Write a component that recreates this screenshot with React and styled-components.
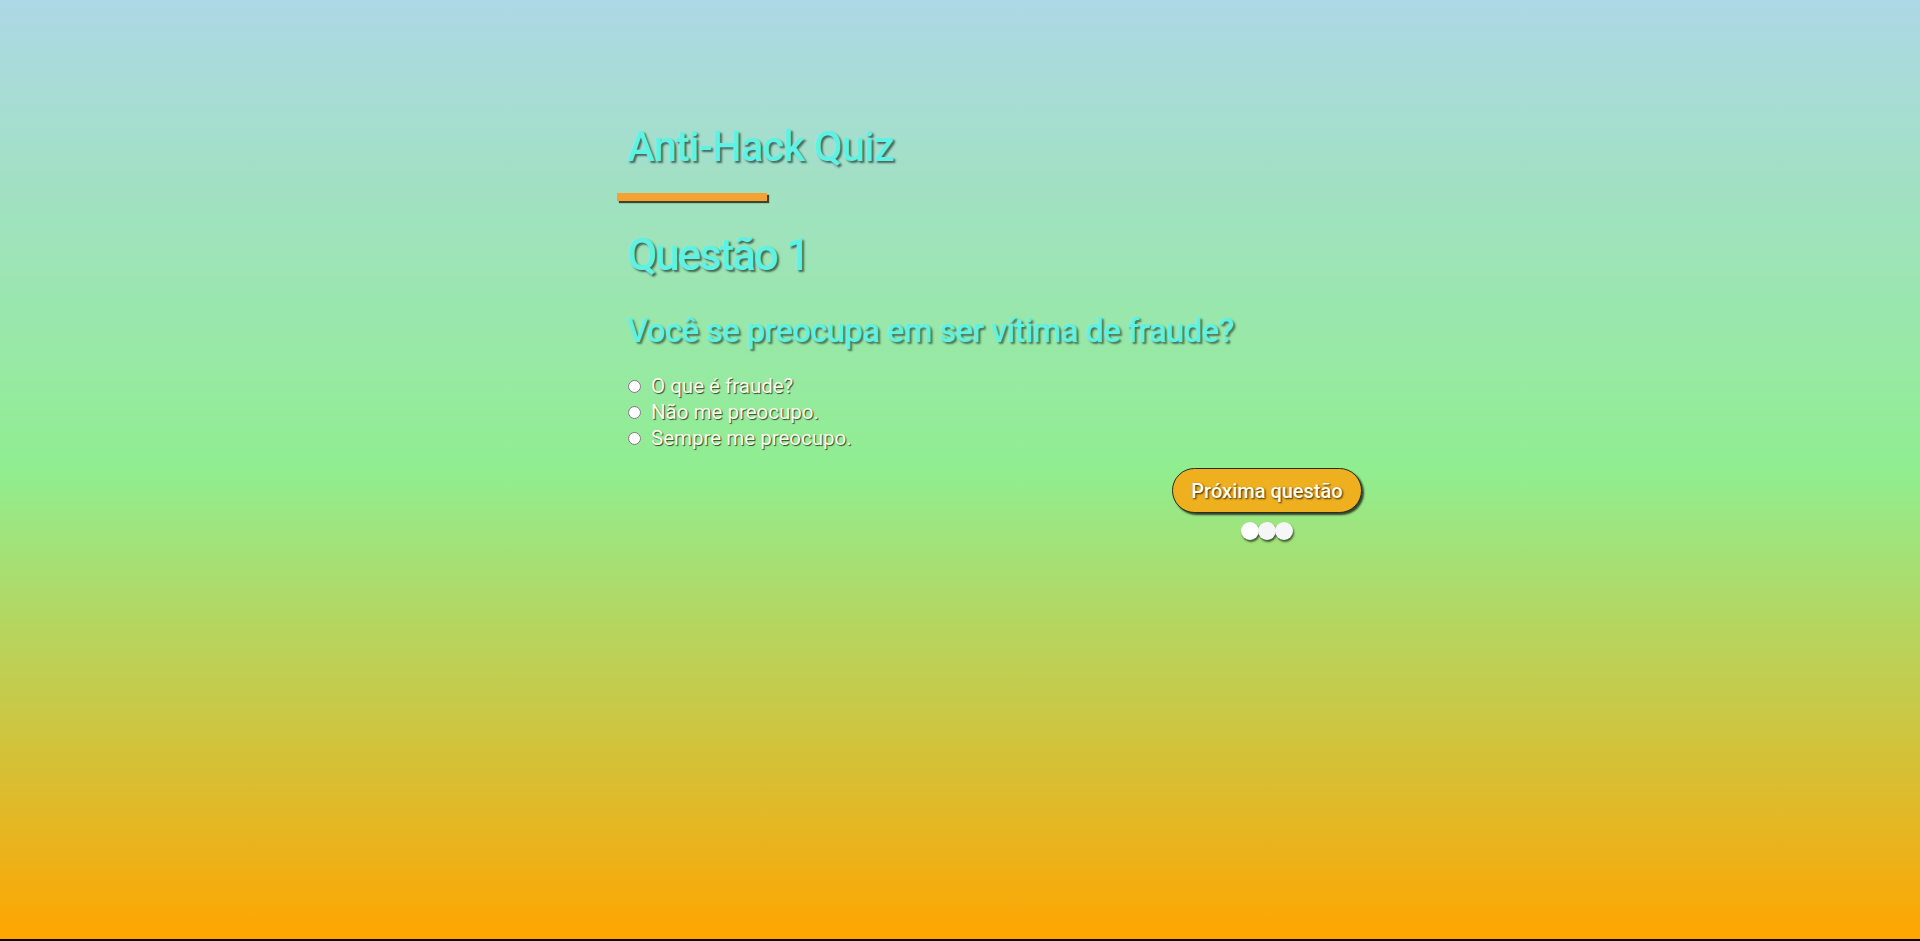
import React, { useState } from 'react';
import styled, { createGlobalStyle } from 'styled-components';

const GlobalStyle = createGlobalStyle`
  html, body {
    margin: 0;
    padding: 0;
    background: #120800;
  }
  body {
    font-family: Roboto, "Noto Sans", sans-serif;
  }
`;

const Page = styled.div`
  min-height: 939px;
  background: linear-gradient(to bottom, lightblue, lightgreen, orange);
  box-sizing: border-box;
  padding: 122px 0 0 617px;
`;

const Quiz = styled.div`
  width: 745px;
  display: flex;
  flex-direction: column;
`;

const Title = styled.h1`
  margin: 0;
  padding-left: 10px;
  font-size: 42px;
  font-weight: 500;
  letter-spacing: -1px;
  color: #5ef2e4;
  text-shadow: 2px 2px 2px rgba(0, 0, 0, 0.55);
`;

const Underline = styled.div`
  width: 150px;
  height: 8px;
  margin-top: 22px;
  background: #f4a234;
  box-shadow: 2px 2px 1px rgba(40, 30, 0, 0.8);
`;

const QuestionNumber = styled.h2`
  margin: 28px 0 0;
  padding-left: 10px;
  font-size: 44px;
  font-weight: 500;
  letter-spacing: -2.1px;
  color: #5ef2e4;
  text-shadow: 2px 2px 2px rgba(0, 0, 0, 0.55);
`;

const QuestionText = styled.h3`
  margin: 30px 0 0;
  padding-left: 10px;
  font-size: 33px;
  font-weight: 500;
  letter-spacing: -0.7px;
  color: #5ef2e4;
  text-shadow: 2px 2px 2px rgba(0, 0, 0, 0.5);
`;

const Options = styled.div`
  margin-top: 23px;
  padding-left: 10px;
  display: flex;
  flex-direction: column;
`;

const OptionRow = styled.label`
  display: flex;
  align-items: center;
  height: 26px;
  font-size: 20.5px;
  color: #fffbea;
  text-shadow: 1px 1px 1px rgba(0, 0, 0, 0.7);
  cursor: pointer;

  input {
    width: 13px;
    height: 13px;
    margin: 0 10px 0 1px;
  }
`;

const Footer = styled.div`
  align-self: flex-end;
  margin-top: 17px;
  display: flex;
  flex-direction: column;
  align-items: center;
  gap: 9px;
`;

const NextButton = styled.button`
  width: 190px;
  height: 45px;
  border: 1px solid #2a2a20;
  border-radius: 23px;
  background: #efb020;
  box-shadow: 2px 2px 2px rgba(0, 0, 0, 0.7);
  font-family: Roboto, "Noto Sans", sans-serif;
  font-size: 20px;
  font-weight: 500;
  color: #fffbea;
  text-shadow: 1px 1px 2px rgba(0, 0, 0, 0.8);
  cursor: pointer;
`;

const Dots = styled.div`
  display: flex;
`;

const Dot = styled.span`
  width: 18px;
  height: 18px;
  border-radius: 50%;
  background: ${({ active }) => (active ? '#ffffff' : '#f6f6f6')};
  box-shadow: 1px 2px 2px rgba(0, 0, 0, 0.6);
  margin-left: ${({ first }) => (first ? '0' : '-1px')};
`;

const options = ['O que é fraude?', 'Não me preocupo.', 'Sempre me preocupo.'];

export default function App() {
  const [answer, setAnswer] = useState(null);

  return (
    <>
      <GlobalStyle />
      <Page>
        <Quiz>
          <Title>Anti-Hack Quiz</Title>
          <Underline />
          <QuestionNumber>Questão 1</QuestionNumber>
          <QuestionText>Você se preocupa em ser vítima de fraude?</QuestionText>
          <Options>
            {options.map((o, i) => (
              <OptionRow key={o}>
                <input
                  type="radio"
                  name="q1"
                  checked={answer === i}
                  onChange={() => setAnswer(i)}
                />
                {o}
              </OptionRow>
            ))}
          </Options>
          <Footer>
            <NextButton>Próxima questão</NextButton>
            <Dots>
              {[0, 1, 2].map((d) => (
                <Dot key={d} first={d === 0} active={d === 0} />
              ))}
            </Dots>
          </Footer>
        </Quiz>
      </Page>
    </>
  );
}
